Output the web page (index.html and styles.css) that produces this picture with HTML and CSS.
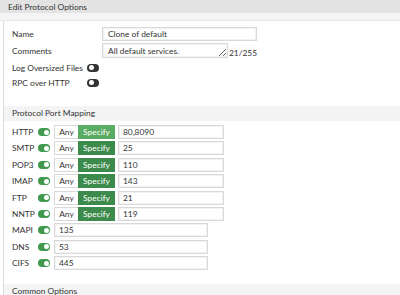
FILE: index.html
```html
<!DOCTYPE html>
<html>
<head>
<meta charset="utf-8">
<link rel="stylesheet" href="styles.css">
</head>
<body>
<div class="title">Edit Protocol Options</div>
<div class="strip"></div>
<div class="card">
  <div class="general">
    <div class="frow">
      <span class="flabel">Name</span>
      <input class="field name-field" value="Clone of default">
    </div>
    <div class="frow comments-row">
      <span class="flabel">Comments</span>
      <textarea class="field comment-field">All default services.</textarea>
      <span class="count">21/255</span>
    </div>
    <div class="trow">
      <span class="tlabel">Log Oversized Files</span>
      <span class="toggle off"></span>
    </div>
    <div class="trow">
      <span class="tlabel">RPC over HTTP</span>
      <span class="toggle off"></span>
    </div>
  </div>
  <div class="section-head">Protocol Port Mapping</div>
  <div class="ports">
    <div class="prow">
      <span class="plabel">HTTP</span><span class="toggle on"></span>
      <span class="seg"><span class="any">Any</span><span class="spec hover">Specify</span></span>
      <input class="field port-field" value="80,8090">
    </div>
    <div class="prow">
      <span class="plabel">SMTP</span><span class="toggle on"></span>
      <span class="seg"><span class="any">Any</span><span class="spec">Specify</span></span>
      <input class="field port-field" value="25">
    </div>
    <div class="prow">
      <span class="plabel">POP3</span><span class="toggle on"></span>
      <span class="seg"><span class="any">Any</span><span class="spec">Specify</span></span>
      <input class="field port-field" value="110">
    </div>
    <div class="prow">
      <span class="plabel">IMAP</span><span class="toggle on"></span>
      <span class="seg"><span class="any">Any</span><span class="spec">Specify</span></span>
      <input class="field port-field" value="143">
    </div>
    <div class="prow">
      <span class="plabel">FTP</span><span class="toggle on"></span>
      <span class="seg"><span class="any">Any</span><span class="spec">Specify</span></span>
      <input class="field port-field" value="21">
    </div>
    <div class="prow">
      <span class="plabel">NNTP</span><span class="toggle on"></span>
      <span class="seg"><span class="any">Any</span><span class="spec">Specify</span></span>
      <input class="field port-field" value="119">
    </div>
    <div class="prow">
      <span class="plabel">MAPI</span><span class="toggle on"></span>
      <input class="field wide-field" value="135">
    </div>
    <div class="prow">
      <span class="plabel">DNS</span><span class="toggle on"></span>
      <input class="field wide-field" value="53">
    </div>
    <div class="prow">
      <span class="plabel">CIFS</span><span class="toggle on"></span>
      <input class="field wide-field" value="445">
    </div>
  </div>
  <div class="section-head">Common Options</div>
</div>
</body>
</html>
```

FILE: styles.css
```css
html, body {
  margin: 0;
  padding: 0;
  background: #fff;
  font-family: Lato, "Open Sans", sans-serif;
  font-size: 8.4px;
  color: #333;
  overflow: hidden;
}

.title {
  height: 13px;
  line-height: 14px;
  padding-left: 8px;
  background: #e3e3e3;
  color: #333;
}

.strip {
  height: 7px;
  background: #f4f4f4;
  border-bottom: 1px solid #e6e6e6;
}

.card {
  margin-left: 3px;
  border-left: 1px solid #dcdcdc;
}

.general {
  padding: 6px 0 16px 8px;
  display: flex;
  flex-direction: column;
}

.frow {
  display: flex;
  align-items: flex-end;
  margin-bottom: 2px;
}

.flabel {
  width: 90px;
  align-self: center;
  white-space: nowrap;
}

.field {
  box-sizing: border-box;
  margin: 0;
  border: 1px solid #d9d9d9;
  box-shadow: inset 0 0 0 1px #f2f2f2;
  background: #fff;
  font-family: Lato, "Open Sans", sans-serif;
  font-size: 8.4px;
  color: #333;
  outline: none;
}

.name-field {
  width: 155px;
  height: 14px;
  padding: 0 5px;
}

.comment-field {
  width: 126px;
  height: 15px;
  padding: 2px 5px 0;
  line-height: 10px;
  overflow: hidden;
  display: block;
}

.count {
  margin-left: 1px;
  line-height: 9px;
}

.trow {
  display: flex;
  align-items: center;
  height: 15px;
}

.tlabel {
  width: 75px;
  white-space: nowrap;
}

.toggle {
  position: relative;
  display: inline-block;
  width: 12px;
  height: 8px;
  border-radius: 4px;
  flex: none;
}

.toggle::after {
  content: "";
  position: absolute;
  top: 1.5px;
  width: 5px;
  height: 5px;
  border-radius: 50%;
  background: #fff;
}

.toggle.off {
  background: #333;
}

.toggle.off::after {
  left: 1.5px;
}

.toggle.on {
  background: #3f9a4e;
}

.toggle.on::after {
  right: 1.5px;
}

.section-head {
  height: 15px;
  line-height: 15px;
  padding-left: 8px;
  background: #f4f4f4;
}

.ports {
  padding: 4px 0 14px 8px;
  display: flex;
  flex-direction: column;
  gap: 2.375px;
}

.prow {
  display: flex;
  align-items: center;
  height: 14px;
}

.plabel {
  width: 26px;
  white-space: nowrap;
}

.seg {
  display: flex;
  height: 14px;
  margin-left: 4px;
}

.any {
  box-sizing: border-box;
  width: 24px;
  border: 1px solid #d9d9d9;
  border-right: none;
  text-align: center;
  line-height: 12px;
  color: #333;
}

.spec {
  width: 37px;
  background: #3d8b4c;
  color: #fff;
  text-align: center;
  line-height: 14px;
}

.spec.hover {
  background: #5aac64;
}

.port-field {
  width: 106px;
  height: 14px;
  margin-left: 3px;
  padding: 0 4px;
}

.wide-field {
  width: 154px;
  height: 14px;
  margin-left: 4px;
  padding: 0 4px;
}
```
